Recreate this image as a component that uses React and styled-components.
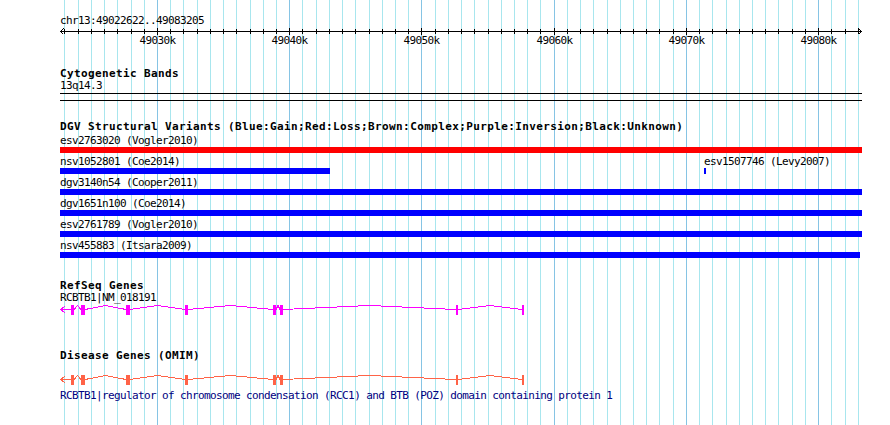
import React from "react";
import styled, { createGlobalStyle } from "styled-components";

const VIEW_START = 49022622;
const VIEW_END = 49083205;
const LEFT = 60;
const TRACK_WIDTH = 801;
const PX_PER_BP = TRACK_WIDTH / (VIEW_END - VIEW_START);

const toX = (bp) => (bp - VIEW_START) * PX_PER_BP;

const BLUE = "#0000ff";
const RED = "#ff0000";

const variantRows = [
  [{ name: "esv2763020", study: "Vogler2010", start: 49010000, end: 49090000, color: RED }],
  [
    { name: "nsv1052801", study: "Coe2014", start: 49000000, end: 49043050, color: BLUE },
    { name: "esv1507746", study: "Levy2007", start: 49071330, end: 49071480, color: BLUE },
  ],
  [{ name: "dgv3140n54", study: "Cooper2011", start: 49010000, end: 49090000, color: BLUE }],
  [{ name: "dgv1651n100", study: "Coe2014", start: 49010000, end: 49090000, color: BLUE }],
  [{ name: "esv2761789", study: "Vogler2010", start: 49010000, end: 49090000, color: BLUE }],
  [{ name: "nsv455883", study: "Itsara2009", start: 49010000, end: 49083130, color: BLUE }],
];

// exon boxes for RCBTB1, [x, width] in track pixels
const exons = [
  [11, 3], [21, 4], [66, 4], [125, 3], [213, 3], [220, 3], [396, 2], [462, 2],
];

const GlobalStyle = createGlobalStyle`
  html, body {
    margin: 0;
    padding: 0;
    background: #ffffff;
  }
  body {
    font-family: "DejaVu Sans Mono", "Liberation Mono", monospace;
  }
`;

const Panel = styled.div`
  position: relative;
  width: 890px;
  height: 425px;
  overflow: hidden;
  background: #ffffff;
`;

const GridLayer = styled.svg`
  position: absolute;
  top: 0;
  left: 0;
  width: 890px;
  height: 425px;
`;

const Tracks = styled.div`
  position: relative;
  z-index: 1;
  padding: 15px 0 0 ${LEFT}px;
`;

const Text = styled.div`
  height: 12px;
  font-size: 11px;
  line-height: 12px;
  letter-spacing: -0.62px;
  white-space: nowrap;
  color: ${(p) => p.$color || "#000000"};
`;

const Title = styled(Text)`
  font-weight: bold;
  letter-spacing: 0.38px;
  margin-top: ${(p) => p.$gap || 0}px;
`;

const RulerSvg = styled.svg`
  display: block;
  width: 810px;
  height: 21px;
  overflow: visible;
`;

const Band = styled.div`
  box-sizing: border-box;
  width: 802px;
  height: 8px;
  margin-top: 1px;
  border-top: 1px solid #000000;
  border-bottom: 1px solid #000000;
`;

const Lane = styled.div`
  margin-top: 2px;
`;

const Row = styled.div`
  position: relative;
  height: 21px;
`;

const Feature = styled.div`
  position: absolute;
  top: 0;
`;

const Bar = styled.div`
  height: 6px;
  background: ${(p) => p.$color};
`;

const GeneSvg = styled.svg`
  display: block;
  width: 810px;
  height: 12px;
  margin-top: ${(p) => p.$gap || 0}px;
`;

const Desc = styled(Text)`
  margin-top: 4px;
`;

function Grid() {
  const lines = [];
  for (let k = Math.ceil(VIEW_START / 1000); k * 1000 <= VIEW_END; k++) {
    const x = Math.floor(LEFT + toX(k * 1000)) + 0.5;
    lines.push(
      <line key={k} x1={x} x2={x} y1={0} y2={425}
        stroke={k % 10 === 0 ? "#86c4e4" : "#a8e6ee"} strokeWidth={1} />
    );
  }
  return <GridLayer shapeRendering="crispEdges">{lines}</GridLayer>;
}

function Ruler() {
  const ticks = [];
  for (let k = Math.ceil(VIEW_START / 1000); k * 1000 <= VIEW_END; k++) {
    const x = Math.floor(toX(k * 1000)) + 0.5;
    const major = k % 10 === 0;
    ticks.push(
      <line key={k} x1={x} x2={x} y1={major ? 1 : 2} y2={major ? 8 : 7}
        stroke="#000" strokeWidth={1} />
    );
    if (major) {
      ticks.push(
        <text key={"t" + k} x={x} y={17} textAnchor="middle" fontSize="11"
          letterSpacing="-0.62" fontFamily='"DejaVu Sans Mono", monospace' fill="#000">
          {k}k
        </text>
      );
    }
  }
  return (
    <RulerSvg shapeRendering="crispEdges">
      <line x1={0} x2={802} y1={4.5} y2={4.5} stroke="#000" />
      <path d="M3.5 1.5 L0.5 4.5 L3.5 7.5 M798.5 1.5 L801.5 4.5 L798.5 7.5"
        fill="none" stroke="#000" />
      {ticks}
    </RulerSvg>
  );
}

function VariantFeature({ v }) {
  const left = Math.max(0, toX(v.start));
  const right = Math.min(802, toX(v.end));
  const width = Math.max(2, Math.round(right - left));
  return (
    <Feature style={{ left: Math.round(left) }}>
      <Text>{v.name} ({v.study})</Text>
      <Bar $color={v.color} style={{ width }} />
    </Feature>
  );
}

function GeneGlyph({ color, gap }) {
  const cy = 5.5;
  let d = `M0.5 ${cy} L${exons[0][0]} ${cy} M5 2 L0.5 ${cy} L5 9`;
  for (let i = 0; i < exons.length - 1; i++) {
    const a = exons[i][0] + exons[i][1];
    const b = exons[i + 1][0];
    d += ` M${a} ${cy} L${(a + b) / 2} ${cy - 4} L${b} ${cy}`;
  }
  return (
    <GeneSvg $gap={gap} shapeRendering="crispEdges">
      <path d={d} fill="none" stroke={color} strokeWidth={1} />
      {exons.map(([x, w], i) => (
        <rect key={i} x={x} y={1} width={w} height={10} fill={color} />
      ))}
    </GeneSvg>
  );
}

export default function App() {
  return (
    <Panel>
      <GlobalStyle />
      <Grid />
      <Tracks>
        <Text>chr13:49022622..49083205</Text>
        <Ruler />

        <Title $gap={20}>Cytogenetic Bands</Title>
        <Text>13q14.3</Text>
        <Band />

        <Title $gap={20}>
          DGV Structural Variants (Blue:Gain;Red:Loss;Brown:Complex;Purple:Inversion;Black:Unknown)
        </Title>
        <Lane>
          {variantRows.map((row, i) => (
            <Row key={i}>
              {row.map((v) => <VariantFeature key={v.name} v={v} />)}
            </Row>
          ))}
        </Lane>

        <Title $gap={19}>RefSeq Genes</Title>
        <Text>RCBTB1|NM_018191</Text>
        <GeneGlyph color="#ff00ff" />

        <Title $gap={34}>Disease Genes (OMIM)</Title>
        <GeneGlyph color="#ff6347" gap={12} />
        <Desc $color="#000080">
          RCBTB1|regulator of chromosome condensation (RCC1) and BTB (POZ) domain containing protein 1
        </Desc>
      </Tracks>
    </Panel>
  );
}
